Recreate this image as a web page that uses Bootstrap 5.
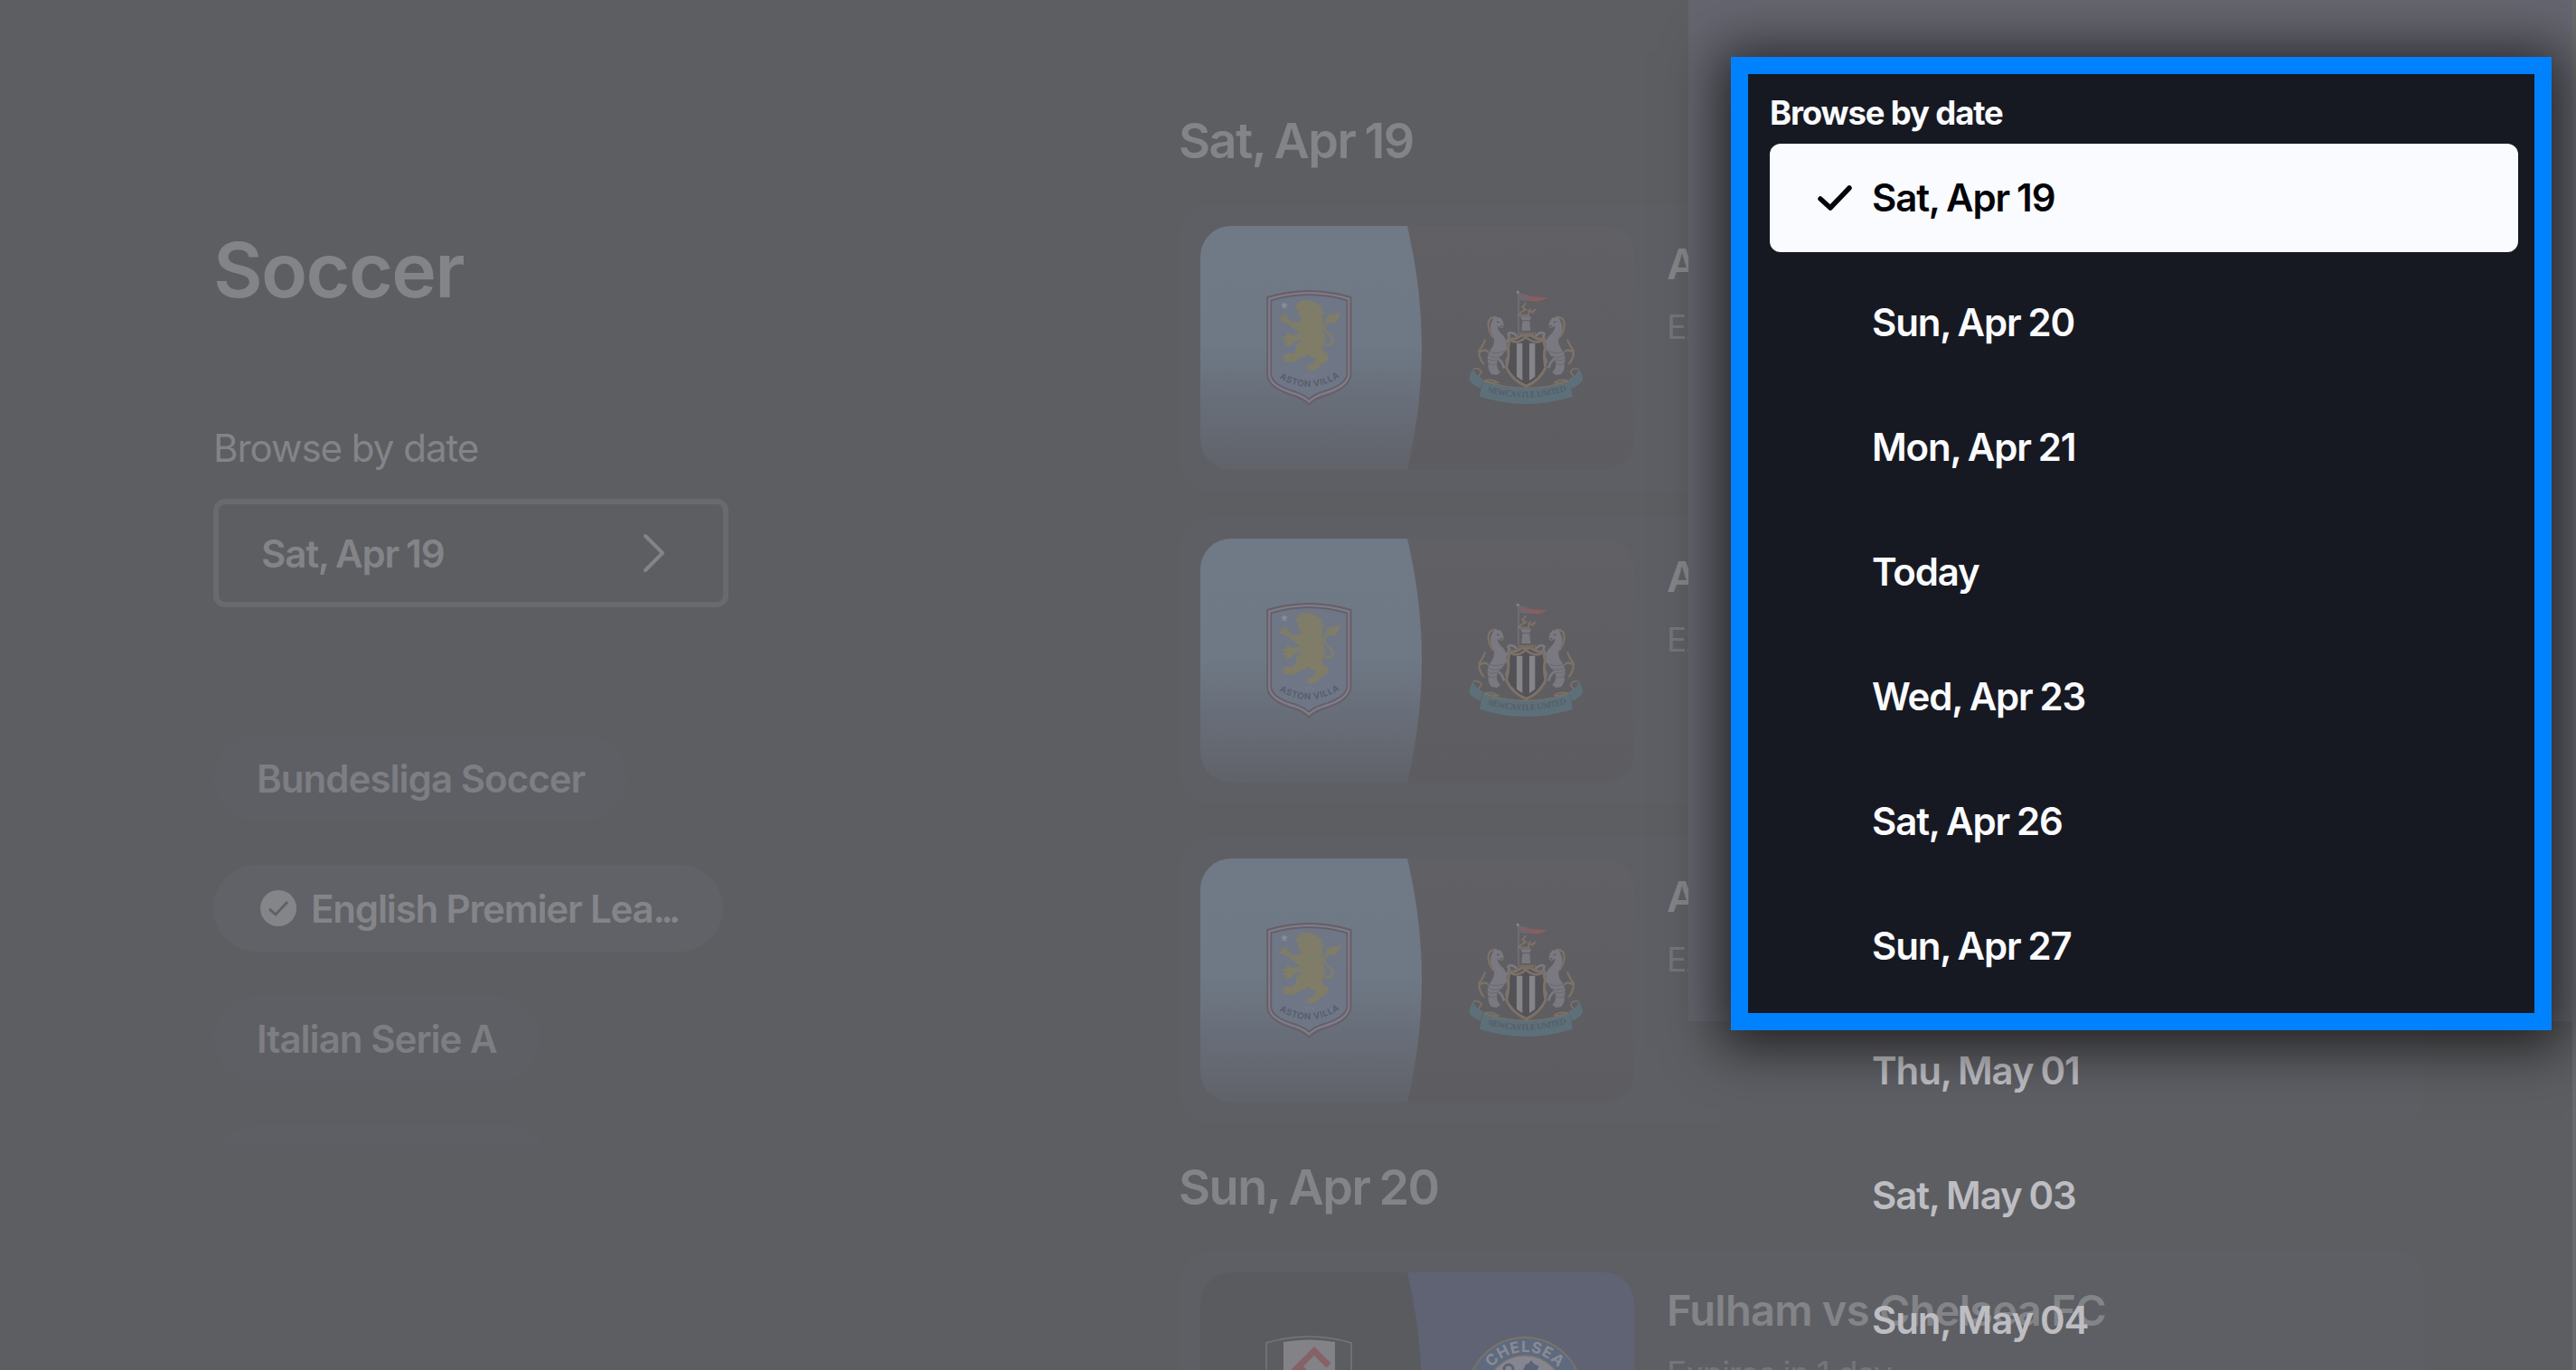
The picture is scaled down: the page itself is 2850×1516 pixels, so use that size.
<!DOCTYPE html>
<html lang="en">

<head>
  <meta charset="UTF-8" />
  <meta name="viewport" content="width=device-width, initial-scale=1.0" />
  <title>Soccer - Browse by date</title>
  <link href="https://cdn.jsdelivr.net/npm/bootstrap@5.3.3/dist/css/bootstrap.min.css" rel="stylesheet">

  <style>
    body {
      font-family: Inter, "Liberation Sans", sans-serif;
      background: #5d5e62;
      color: #838488;
    }
    .screen { height: 1516px; }

    /* left column */
    .sidebar { width: 1304px; padding: 249px 0 0 236px; }
    .sport { font-size: 84px; line-height: 100px; letter-spacing: -1.6px; margin: 0 0 122px 0; }
    .label { font-size: 42px; line-height: 50px; letter-spacing: -1px; margin-bottom: 31px; }
    .picker { width: 570px; height: 120px; border: 6px solid #696a6e; border-radius: 13px; padding: 0 63px 0 47px; }
    .date { font-size: 42px; font-weight: 600; letter-spacing: -1.15px; word-spacing: -1.5px; }
    .leagues { height: 455px; gap: 48px; margin-top: 141px; }
    .pill { height: 96px; border-radius: 48px; padding: 0 47px 0 48px; background: #5e5f64; color: #7d7e83; font-size: 42px; font-weight: 600; letter-spacing: -0.95px; }
    .pill.active { background: #616267; color: #848589; width: 564px; padding: 0 0 0 52px; gap: 16px; letter-spacing: -1.15px; }
    .pill.blank { width: 374px; }
    .dots { letter-spacing: -4.8px; }

    /* schedule */
    .schedule { width: 1380px; padding-top: 121px; }
    .day { font-size: 54px; font-weight: 600; line-height: 70px; letter-spacing: -1.5px; word-spacing: -2px; margin-bottom: 35px; }
    .game { width: 1379px; height: 318px; padding: 24px; border-radius: 34px; background: #5e5f64; }
    .gap-small { margin-bottom: 28px; }
    .gap-large { margin-bottom: 36px; }
    .day-end { margin-bottom: 35px; }
    .thumb { width: 480px; height: 270px; border-radius: 34px; flex: none; }
    .info { padding: 12px 0 0 36px; white-space: nowrap; }
    .info.covered { width: 60px; overflow: hidden; }
    .match { font-size: 47px; font-weight: 600; line-height: 60px; letter-spacing: -0.75px; }
    .expires { font-size: 37px; line-height: 46px; letter-spacing: -1.3px; margin-top: 17px; color: #74757a; }

    /* date drawer and highlighted menu */
    .drawer { left: 1868px; top: 0; width: 979px; height: 1130px; background: #65656f; }
    .edge { right: 0; top: 0; width: 4px; height: 1516px; background: #6a6a6d; }
    .later { left: 2071px; top: 1125px; color: #bdbdc2; }
    .menu { left: 1915px; top: 63px; width: 908px; height: 1077px; border: 19px solid #0082ff; background: #171922;
      padding: 21px 18px 0 24px; color: #fafbff; box-shadow: 0 6px 56px 12px rgba(0,0,0,.66); }
    .menu-title { font-size: 36.5px; line-height: 44px; letter-spacing: -1.15px; margin-bottom: 12px; }
    .item { height: 120px; margin-bottom: 18px; padding: 0 0 1px 113px; border-radius: 12px; }
    .item.active { background: #fafbff; color: #04050a; padding-left: 53px; }
    .item.active svg { margin-right: 22px; }
  </style>
</head>

<body>

  <!-- shared artwork -->
  <svg width="0" height="0" class="position-absolute">
    <defs>
      <linearGradient id="sky" x1="0" y1="0" x2="0" y2="1">
        <stop offset="0" stop-color="#6f7a86" />
        <stop offset="0.48" stop-color="#6e7985" />
        <stop offset="0.72" stop-color="#686e79" />
        <stop offset="1" stop-color="#606269" />
      </linearGradient>
      <linearGradient id="dark" x1="0" y1="0" x2="0" y2="1">
        <stop offset="0" stop-color="#616065" />
        <stop offset="1" stop-color="#5d5c60" />
      </linearGradient>
      <path id="villaArc" d="M58 308 Q158 372 266 304" />
      <path id="toonArc" d="M66 368 Q206 412 350 364" />
      <path id="blueArc" d="M312 135 A47 47 0 0 1 406 135" />

      <symbol id="villa" viewBox="0 0 318 408">
        <path d="M22 42 Q159 1 298 42 V300 Q292 344 212 368 Q176 380 160 398 Q143 380 108 368 Q26 344 22 300Z" fill="#6f7686" stroke="#685f69" stroke-width="7" />
        <path d="M28 47 Q159 8 292 47 V300 Q286 340 208 362 Q176 372 160 389 Q143 372 112 362 Q32 340 28 300Z" fill="none" stroke="#817d87" stroke-width="6" />
        <path d="M34 52 Q159 15 286 52 V299 Q280 334 204 356 Q176 365 160 380 Q143 365 116 356 Q38 334 34 299Z" fill="none" stroke="#655e6a" stroke-width="5" />
        <path d="M78 56 l3 8 9 1 -7 6 3 9 -8 -5 -8 5 3 -9 -7 -6 9 -1z" fill="#8b8d99" />
        <g fill="#7f7d68">
          <path d="M120 92 L128 86 L116 80 L120 64 Q130 50 152 51 Q178 52 192 68 L206 74 L200 84 L210 96 L201 105 L207 118 L201 128 L215 137 L203 146 Q204 160 212 170 L217 186 L207 196 Q200 206 208 222 Q226 228 225 246 Q216 262 202 262 Q192 280 174 286 Q154 288 151 277 Q156 264 172 264 L184 246 Q162 240 153 230 Q142 246 127 242 Q120 259 98 256 L78 256 Q70 244 76 232 Q90 226 107 230 Q120 217 115 207 Q122 192 136 182 Q118 182 104 197 Q92 208 80 202 L84 192 L70 190 L79 181 L67 170 L83 172 L88 156 L100 168 Q116 166 130 161 L108 145 Q92 130 76 124 L60 118 L70 111 L61 98 L76 106 L82 92 L89 110 L100 122 Q118 128 134 120 L136 110 L122 108 L130 100Z" />
          <path d="M214 126 Q212 100 235 99 Q250 99 264 89 Q259 124 237 129 Q224 124 214 126Z" />
          <path d="M210 200 Q246 202 238 178 Q230 164 215 157 Q202 140 222 121" fill="none" stroke="#7f7d68" stroke-width="8" />
        </g>
        <g font-family="Inter, sans-serif" text-anchor="middle">
          <text x="160" y="310" font-size="16" fill="#7b7f8c" letter-spacing="2">1874</text>
          <text font-size="29" font-weight="600" fill="#565c6a" letter-spacing="2"><textPath href="#villaArc" startOffset="50%">ASTON VILLA</textPath></text>
        </g>
      </symbol>

      <symbol id="horse" viewBox="0 0 420 435">
        <g fill="none" stroke="#7c7267" stroke-width="7">
          <path d="M108 122 Q78 120 80 152 Q84 178 98 192" />
          <path d="M70 196 Q60 222 50 232 Q46 258 66 280 M52 238 Q72 226 80 240" />
        </g>
        <path d="M98 124 L118 124 Q132 136 131 153 L124 160 L110 152 Q112 170 128 182 Q143 198 141 222 Q133 245 112 262 Q104 280 112 296 L120 306 L108 315 L90 312 Q76 296 80 276 Q72 256 84 236 Q104 212 98 190 Q84 170 88 146Z" fill="#7a7981" />
        <path d="M134 210 Q156 194 146 178 Q156 168 176 186 M134 222 Q154 236 146 256 Q136 270 144 278 M112 262 Q126 268 132 292" fill="none" stroke="#7a7981" stroke-width="8" />
        <path d="M82 236 Q104 248 132 236 M80 248 Q98 262 122 252 M78 262 Q94 272 110 264 M80 278 Q92 284 106 278" fill="none" stroke="#626269" stroke-width="2" />
        <path d="M108 138 l8 2 M120 154 l8 -3" stroke="#4f4f54" stroke-width="3" />
      </symbol>

      <symbol id="toon" viewBox="0 0 420 435">
        <path d="M180 40 V172" stroke="#7c7c82" stroke-width="3" />
        <circle cx="178" cy="40" r="5" fill="#85858b" />
        <path d="M182 42 Q232 60 276 56 Q254 76 214 68 L182 66Z" fill="#865f62" />
        <path d="M182 42 L212 50 V68 L182 66Z" fill="#5b6f7c" />
        <path d="M182 54 H214 M197 45 V68" stroke="#865f62" stroke-width="6" />
        <path d="M206 76 Q186 92 204 98 Q188 104 180 116 H214 Q212 102 220 94 M204 98 L190 86 M218 106 Q232 104 238 96 M226 110 L232 98" fill="none" stroke="#7c7267" stroke-width="6" />
        <path d="M187 121 H222 L217 136 L220 168 H190 L193 136Z" fill="#7a7981" />
        <path d="M188 134 H220" stroke="#5e5e63" stroke-width="3" />
        <use href="#horse" width="420" height="435" />
        <use href="#horse" width="420" height="435" transform="translate(412 0) scale(-1 1)" />
        <path d="M150 194 Q168 200 190 184 H222 Q244 200 262 194 L268 225 Q262 250 270 290 Q252 332 206 352 Q158 332 140 290 Q150 250 146 225Z" fill="#525257" stroke="#7c7267" stroke-width="9" />
        <path d="M174 209 H193 V334 L174 320Z M216 209 H235 V320 L216 334Z" fill="#848489" />
        <path d="M154 200 Q176 214 204 190 Q234 214 260 200 M176 177 H236" fill="none" stroke="#7c7267" stroke-width="8" />
        <path d="M176 177 H236" stroke="#5c5a5a" stroke-width="8" stroke-dasharray="2 7" />
        <path d="M66 334 Q90 326 112 340 Q90 344 66 334 M298 340 Q320 326 344 334 Q322 344 298 340" fill="none" stroke="#7c7267" stroke-width="5" />
        <path d="M30 294 Q14 318 17 332 Q30 350 54 359 L62 326 Q38 322 30 294Z M380 294 Q396 318 393 332 Q382 350 356 359 L348 326 Q372 322 380 294Z" fill="#5d707a" />
        <path d="M30 294 Q54 290 57 306 L46 320 M380 294 Q356 290 353 306 L364 320" fill="none" stroke="#7c7267" stroke-width="5" />
        <path d="M62 336 Q206 384 350 336 L360 386 Q206 436 50 386Z" fill="#5d707a" />
        <path d="M62 334 Q206 382 350 334" fill="none" stroke="#7c7267" stroke-width="4" />
        <text font-family="Liberation Serif, serif" font-size="28" fill="#50565e" text-anchor="middle"><textPath href="#toonArc" startOffset="50%" textLength="268">NEWCASTLE UNITED</textPath></text>
      </symbol>

      <symbol id="villaToon" viewBox="0 0 480 270">
        <rect width="480" height="270" fill="url(#dark)" />
        <path d="M0 0 H229 Q261 135 229 270 H0Z" fill="url(#sky)" />
        <use href="#villa" x="67" y="65" width="106" height="136" />
        <use href="#toon" x="292" y="60" width="140" height="145" />
      </symbol>
    </defs>
  </svg>

  <div class="screen position-relative overflow-hidden d-flex">

    <div class="sidebar flex-shrink-0">
      <h1 class="sport fw-semibold">Soccer</h1>
      <div class="label">Browse by date</div>
      <div class="picker d-flex align-items-center justify-content-between">
        <span class="date">Sat, Apr 19</span>
        <svg width="26" height="44" viewBox="0 0 26 44" fill="none" stroke="#838488" stroke-width="4" stroke-linecap="round" stroke-linejoin="round"><path d="M3 3 L22 22 L3 41" /></svg>
      </div>

      <div class="leagues d-flex flex-column align-items-start overflow-hidden">
        <div class="pill d-flex align-items-center flex-shrink-0">Bundesliga Soccer</div>
        <div class="pill active d-flex align-items-center flex-shrink-0">
          <svg width="40" height="40" viewBox="0 0 40 40"><circle cx="20" cy="20" r="20" fill="#848589" /><path d="M10 21 L17 27 L30 13" fill="none" stroke="#616267" stroke-width="3" /></svg>
          <span>English Premier Lea<span class="dots">...</span></span>
        </div>
        <div class="pill d-flex align-items-center flex-shrink-0">Italian Serie A</div>
        <div class="pill blank flex-shrink-0"></div>
      </div>
    </div>

    <div class="schedule flex-shrink-0">
      <div class="day">Sat, Apr 19</div>
      <div class="game d-flex gap-small">
        <svg class="thumb"><use href="#villaToon" width="480" height="270" /></svg>
        <div class="info covered">
          <div class="match">Aston Villa vs Newcastle</div>
          <div class="expires">Expires in 1 day</div>
        </div>
      </div>
      <div class="game d-flex gap-large">
        <svg class="thumb"><use href="#villaToon" width="480" height="270" /></svg>
        <div class="info covered">
          <div class="match">Aston Villa vs Newcastle</div>
          <div class="expires">Expires in 1 day</div>
        </div>
      </div>
      <div class="game d-flex day-end">
        <svg class="thumb"><use href="#villaToon" width="480" height="270" /></svg>
        <div class="info covered">
          <div class="match">Aston Villa vs Newcastle</div>
          <div class="expires">Expires in 1 day</div>
        </div>
      </div>

      <div class="day">Sun, Apr 20</div>
      <div class="game d-flex">
        <svg class="thumb" viewBox="0 0 480 270">
          <rect width="480" height="270" fill="#606373" />
          <path d="M0 0 H229 Q261 135 229 270 H0Z" fill="#5a5b5f" />
          <path d="M73 78 Q120 64 167 78 V170 Q160 186 120 198 Q80 186 73 170Z" fill="#5c5d61" stroke="#75767b" stroke-width="1.5" />
          <path d="M92 77 Q120 72 149 77 V186 H92Z" fill="#828287" />
          <path d="M98 115 L126 87 L142 103 M110 105 L122 117" fill="none" stroke="#866165" stroke-width="7" />
          <circle cx="359" cy="135" r="63" fill="#5e6a80" stroke="#7a7469" stroke-width="1.8" />
          <circle cx="359" cy="135" r="43" fill="#858690" stroke="#7a7469" stroke-width="1.5" />
          <circle cx="341" cy="107" r="5" fill="none" stroke="#5b6378" stroke-width="3" />
          <path d="M357 108 l3 -6 4 -2 2 -3 3 4 6 3 -4 6Z" fill="#5b6378" />
          <text font-family="Inter, sans-serif" font-weight="700" font-size="17" fill="#8a8b93" text-anchor="middle"><textPath href="#blueArc" startOffset="50%" textLength="84">CHELSEA</textPath></text>
        </svg>
        <div class="info">
          <div class="match">Fulham vs Chelsea FC</div>
          <div class="expires">Expires in 1 day</div>
        </div>
      </div>
    </div>

    <!-- drawer -->
    <div class="drawer position-absolute"></div>
    <div class="edge position-absolute"></div>
    <div class="later position-absolute">
      <div class="item date d-flex align-items-center ps-0">Thu, May 01</div>
      <div class="item date d-flex align-items-center ps-0">Sat, May 03</div>
      <div class="item date d-flex align-items-center ps-0">Sun, May 04</div>
    </div>

    <div class="menu position-absolute">
      <div class="menu-title fw-bold">Browse by date</div>
      <div class="item active date d-flex align-items-center">
        <svg width="38" height="30" viewBox="0 0 38 30" fill="none" stroke="#04050a" stroke-width="5.5" stroke-linecap="round" stroke-linejoin="round"><path d="M3 16 L14 26 L35 4" /></svg>
        Sat, Apr 19
      </div>
      <div class="item date d-flex align-items-center">Sun, Apr 20</div>
      <div class="item date d-flex align-items-center">Mon, Apr 21</div>
      <div class="item date d-flex align-items-center">Today</div>
      <div class="item date d-flex align-items-center">Wed, Apr 23</div>
      <div class="item date d-flex align-items-center">Sat, Apr 26</div>
      <div class="item date d-flex align-items-center mb-0">Sun, Apr 27</div>
    </div>

  </div>

<script src="https://cdn.jsdelivr.net/npm/bootstrap@5.3.3/dist/js/bootstrap.bundle.min.js"></script>
</body>
</html>
